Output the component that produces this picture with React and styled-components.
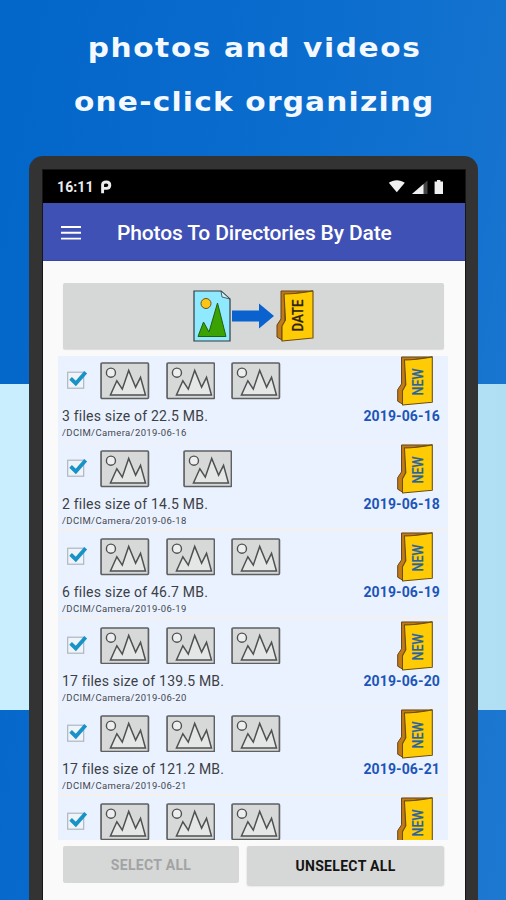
import React, { useState } from 'react';
import styled, { createGlobalStyle } from 'styled-components';

const GlobalStyle = createGlobalStyle`
    * {
        box-sizing: border-box;
    }

    body {
        margin: 0;
        font-family: Roboto, sans-serif;
    }
`;

const Page = styled.main`
    display: flex;
    flex-direction: column;
    align-items: center;
    height: 900px;
    overflow: hidden;
    background:
        linear-gradient(90deg, #c9efff, #b0dff4) 0 384px / 100% 326px no-repeat,
        linear-gradient(100deg, #0366c9 5%, #0b6dce 50%, #1d78d0 100%);
`;

const Headline = styled.header`
    display: flex;
    flex-direction: column;
    align-items: center;
    flex: none;
    height: 156px;
    padding-top: 21px;
`;

const HeadlineText = styled.div`
    height: 54px;
    padding-left: 2px;
    line-height: 54px;
    font-family: "DejaVu Sans", sans-serif;
    font-weight: 700;
    font-size: 26px;
    letter-spacing: ${props => props.spacing}px;
    white-space: nowrap;
    color: #f4f8ff;
    transform: scaleX(1.14);
`;

const Phone = styled.div`
    flex: none;
    width: 449px;
    height: 760px;
    margin-left: 1px;
    padding: 14px 13px 0 14px;
    border-radius: 14px 14px 0 0;
    background: #333333;
`;

const Screen = styled.div`
    height: 100%;
    background: #fafafa;
    box-shadow: 0 0 0 1px #161616;
`;

const StatusBar = styled.div`
    display: flex;
    align-items: center;
    justify-content: space-between;
    height: 33px;
    padding: 0 21px 0 14px;
    background: #000000;
    color: #ececec;
`;

const Clock = styled.div`
    display: flex;
    align-items: center;
    gap: 6px;
    font-size: 14px;
    font-weight: 700;
    letter-spacing: .1px;
`;

const AppBar = styled.div`
    display: flex;
    align-items: center;
    height: 58px;
    padding: 2px 0 0 18px;
    border-bottom: 1px solid #3546a4;
    background: #3f51b5;
    color: #ffffff;
`;

const AppTitle = styled.h1`
    margin: 0 0 0 36px;
    font-size: 21px;
    font-weight: 500;
    letter-spacing: -.15px;
    white-space: nowrap;
`;

const Content = styled.div`
    display: flex;
    flex-direction: column;
    padding: 22px 17px 0 15px;
`;

const OrganizeButton = styled.button`
    display: flex;
    align-items: center;
    justify-content: center;
    height: 66px;
    margin: 0 4px 0 5px;
    padding: 0 0 1px;
    border: 0;
    border-radius: 2px;
    background: #d6d7d7;
    box-shadow: 0 1px 1px rgba(0, 0, 0, .12);
`;

const FileList = styled.div`
    height: 484px;
    margin-top: 7px;
    overflow: hidden;
`;

const Row = styled.div`
    height: 88.2px;
    padding: 0 8px 0 4px;
    background: linear-gradient(#ebf2ff 85.5px, #f5eee9 85.5px, #f5f2ef 87px, #ebf2ff 87px);
`;

const RowTop = styled.div`
    display: flex;
    align-items: flex-start;
    height: 50px;
`;

const CheckButton = styled.button`
    height: 22px;
    margin: 13px 12px 0 4px;
    padding: 0;
    border: 0;
    background: none;
    line-height: 0;
`;

const Thumbs = styled.div`
    display: flex;
    gap: ${props => props.gap}px;
    flex: 1;
    padding-top: 6px;
`;

const RowInfo = styled.div`
    display: flex;
    justify-content: space-between;
    height: 20px;
    line-height: 20px;
    font-size: 14px;
    color: #3b3f46;
    white-space: nowrap;
`;

const FileSize = styled.span`
    letter-spacing: .2px;
`;

const DateLabel = styled.span`
    font-weight: 700;
    letter-spacing: .13px;
    color: #1b55b8;
`;

const Path = styled.div`
    height: 13px;
    line-height: 13px;
    font-size: 9.5px;
    letter-spacing: .38px;
    color: #44474d;
`;

const Actions = styled.div`
    display: flex;
    gap: 8px;
    margin: 6px 4px 0 5px;
`;

const ActionButton = styled.button`
    flex: ${props => (props.disabled ? '0 0 176px' : '1')};
    height: ${props => (props.disabled ? 37 : 39)}px;
    padding: 0;
    border: 0;
    border-radius: 2px;
    background: #d6d7d7;
    box-shadow: ${props => (props.disabled ? 'none' : '0 1px 2px rgba(0, 0, 0, .2)')};
    color: ${props => (props.disabled ? '#a2a3a3' : '#141414')};
    font-family: Roboto, sans-serif;
    font-size: 14px;
    font-weight: 700;
    letter-spacing: .32px;
`;

const rows = [
    { date: '2019-06-16', info: '3 files size of 22.5 MB.', thumbs: 3 },
    { date: '2019-06-18', info: '2 files size of 14.5 MB.', thumbs: 2 },
    { date: '2019-06-19', info: '6 files size of 46.7 MB.', thumbs: 3 },
    { date: '2019-06-20', info: '17 files size of 139.5 MB.', thumbs: 3 },
    { date: '2019-06-21', info: '17 files size of 121.2 MB.', thumbs: 3 },
    { date: '2019-06-22', info: null, thumbs: 3 },
];

function AndroidPIcon() {
    return (
        <svg width="12" height="14" viewBox="0 0 12 14">
            <path
                d="M2.6 13.2V4.6Q2.6 2 6.2 2Q9.8 2 9.8 5.2Q9.8 8.4 6.2 8.4H3"
                fill="none"
                stroke="currentColor"
                strokeWidth="2.9"
            />
        </svg>
    );
}

function StatusIcons() {
    return (
        <svg width="56" height="16" viewBox="0 0 56 16">
            <path d="M.8 3.8C5.6.4 12 .4 16.8 3.8L8.8 13.3Z" fill="#f0f0f0" />
            <path d="M39.5 1.5V15H24Z" fill="#444444" />
            <path d="M35.5 5V15H24Z" fill="#f0f0f0" />
            <path d="M49 1h3.4v1.4H55V15h-8.4V2.4H49Z" fill="#f0f0f0" />
        </svg>
    );
}

function MenuIcon() {
    return (
        <svg width="20" height="14" viewBox="0 0 20 14">
            <path d="M0 1h20M0 6.8h20M0 12.6h20" stroke="#ffffff" strokeWidth="1.9" />
        </svg>
    );
}

function PictureFile() {
    return (
        <svg width="38" height="52" viewBox="0 0 38 52">
            <path d="M1 1h27l9 8v42H1Z" fill="#8feaff" stroke="#333c40" strokeWidth="1.2" />
            <path d="M28 1l1 6 8 2Z" fill="#c9f3fb" stroke="#333c40" strokeWidth=".8" />
            <circle cx="13" cy="13.5" r="5" fill="#ffc414" stroke="#65541b" />
            <path d="M5 46.5l5.5-14.5 5.5 10 8.5-29 8.5 33.5Z" fill="#3ba204" stroke="#255f0c" />
        </svg>
    );
}

function Arrow() {
    return (
        <svg width="44" height="26" viewBox="0 0 44 26">
            <path d="M1 7.5h27V.5l15 12.5-15 12.5v-7H1Z" fill="#0962cd" />
        </svg>
    );
}

function Folder({ width, height, label, length, labelY, color }) {
    return (
        <svg width={width} height={height} viewBox="0 0 38 52">
            <path d="M5 1h32L9 5v26l-3 6v13L1 47V35l4-6Z" fill="#c07a18" stroke="#604018" strokeLinejoin="round" />
            <path d="M8 4Q20 4 37 1v47L6 51V36l3.5-6Z" fill="#ffcb05" stroke="#6c4e0a" strokeWidth="1.1" strokeLinejoin="round" />
            <text
                transform={`translate(27 ${labelY}) rotate(-90)`}
                textAnchor="middle"
                fontFamily="Roboto, sans-serif"
                fontSize="14.5"
                fontWeight="500"
                textLength={length}
                lengthAdjust="spacingAndGlyphs"
                fill={color}
                stroke={color}
                strokeWidth=".2"
            >
                {label}
            </text>
        </svg>
    );
}

function Thumb() {
    return (
        <svg width="49.5" height="37.5" viewBox="0 0 50 38">
            <rect x="1" y="1" width="48" height="36" rx="1" fill="#d7d8d8" stroke="#5e6062" strokeWidth="1.7" />
            <circle cx="11" cy="10.8" r="4.6" fill="#eeeeee" stroke="#4e5052" strokeWidth="1.4" />
            <path d="M10.5 33.5L17 19l5.5 8.5L29 8.5l7 17 5-10 5 18Z" fill="#e5e6e6" stroke="#4e5052" strokeWidth="1.5" />
        </svg>
    );
}

function Checkbox({ checked, onClick }) {
    return (
        <CheckButton onClick={onClick}>
            <svg width="22" height="22" viewBox="0 0 22 22">
                <rect x="1.7" y="3.2" width="16" height="16" fill="#f0f3f8" stroke="#a7b1bd" strokeWidth="1.1" />
                {checked && <path d="M4.6 9.4l5.2 5L19.7 3.2" fill="none" stroke="#1793c8" strokeWidth="3.8" />}
            </svg>
        </CheckButton>
    );
}

function FileRow({ row, checked, onToggle }) {
    return (
        <Row>
            <RowTop>
                <Checkbox checked={checked} onClick={onToggle} />
                <Thumbs gap={row.thumbs === 2 ? 33 : 16}>
                    {Array.from({ length: row.thumbs }, (_, i) => <Thumb key={i} />)}
                </Thumbs>
                <Folder width={50} height={50} label="NEW" length={28} labelY={27} color="#28639d" />
            </RowTop>
            {row.info && (
                <>
                    <RowInfo>
                        <FileSize>{row.info}</FileSize>
                        <DateLabel>{row.date}</DateLabel>
                    </RowInfo>
                    <Path>{`/DCIM/Camera/${row.date}`}</Path>
                </>
            )}
        </Row>
    );
}

export default function App() {
    const [selected, setSelected] = useState(rows.map(row => row.date));
    const all_selected = selected.length === rows.length;

    function toggle(date) {
        if (selected.includes(date)) {
            setSelected(selected.filter(item => item !== date));
        } else {
            setSelected([...selected, date]);
        }
    }

    return (
        <Page>
            <GlobalStyle />
            <Headline>
                <HeadlineText spacing={1.4}>photos and videos</HeadlineText>
                <HeadlineText spacing={1.05}>one-click organizing</HeadlineText>
            </Headline>
            <Phone>
                <Screen>
                    <StatusBar>
                        <Clock>
                            16:11
                            <AndroidPIcon />
                        </Clock>
                        <StatusIcons />
                    </StatusBar>
                    <AppBar>
                        <MenuIcon />
                        <AppTitle>Photos To Directories By Date</AppTitle>
                    </AppBar>
                    <Content>
                        <OrganizeButton>
                            <PictureFile />
                            <Arrow />
                            <Folder width={40} height={52} label="DATE" length={32} labelY={25.5} color="#2b230c" />
                        </OrganizeButton>
                        <FileList>
                            {rows.map(row => (
                                <FileRow
                                    key={row.date}
                                    row={row}
                                    checked={selected.includes(row.date)}
                                    onToggle={() => toggle(row.date)}
                                />
                            ))}
                        </FileList>
                        <Actions>
                            <ActionButton disabled={all_selected} onClick={() => setSelected(rows.map(row => row.date))}>
                                SELECT ALL
                            </ActionButton>
                            <ActionButton onClick={() => setSelected([])}>UNSELECT ALL</ActionButton>
                        </Actions>
                    </Content>
                </Screen>
            </Phone>
        </Page>
    );
}
